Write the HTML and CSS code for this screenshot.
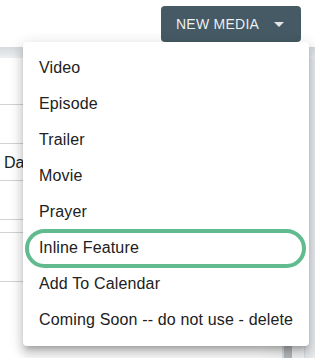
FILE: index.html
```html
<!DOCTYPE html>
<html lang="en">

<head>
    <meta charset="UTF-8">
    <meta name="viewport" content="width=device-width, initial-scale=1.0">
    <title>Media</title>
    <link rel="stylesheet" href="styles.css">
</head>

<body>
    <header class="topbar">
        <button class="new-media">NEW MEDIA <span class="caret"></span></button>
    </header>

    <div class="shade"></div>

    <div class="content">
        <!-- Table behind the menu -->
        <div class="sheet">
            <div class="row row-head"></div>
            <div class="row row-a"></div>
            <div class="row row-b">Date</div>
            <div class="row row-a"></div>
            <div class="row row-gap"></div>
            <div class="row row-tall"></div>
            <div class="row-foot"><span class="scroll"></span></div>
        </div>
        <div class="rail"></div>
    </div>

    <!-- Dropdown Menu -->
    <ul class="menu">
        <li class="menu-item">Video</li>
        <li class="menu-item">Episode</li>
        <li class="menu-item">Trailer</li>
        <li class="menu-item">Movie</li>
        <li class="menu-item">Prayer</li>
        <li class="menu-item focused">Inline Feature</li>
        <li class="menu-item">Add To Calendar</li>
        <li class="menu-item">Coming Soon -- do not use - delete</li>
    </ul>
</body>

</html>
```

FILE: styles.css
```css
/* General Styles */
body {
    font-family: "Liberation Sans", Arial, sans-serif;
    margin: 0;
    padding: 0;
    background-color: white;
    color: #212121;
    overflow: hidden;
    height: 358px;
}

.topbar {
    height: 41px;
    display: flex;
    justify-content: flex-end;
    align-items: flex-start;
    padding: 6px 14px 0 0;
}

.new-media {
    display: flex;
    align-items: center;
    width: 140px;
    height: 36px;
    padding: 0 0 0 15px;
    border: none;
    border-radius: 4px;
    background-color: #455a64;
    color: rgba(255, 255, 255, 0.92);
    font-family: "Liberation Sans", Arial, sans-serif;
    font-size: 14px;
    letter-spacing: 0.25px;
}

.caret {
    margin-left: 15px;
    width: 0;
    height: 0;
    border-top: 5px solid rgba(255, 255, 255, 0.85);
    border-left: 5px solid transparent;
    border-right: 5px solid transparent;
}

.shade {
    height: 11px;
    background: linear-gradient(#d6dade, #eef0f2);
}

/* Table behind */
.content {
    display: flex;
}

.sheet {
    flex: 1;
    background: linear-gradient(90deg, white 85%, #f4f5f6);
}

.row {
    border-bottom: 1px solid #cfd3d6;
    box-sizing: border-box;
    font-size: 16px;
    padding-left: 4px;
}

.row-head { height: 47px; }
.row-a { height: 39px; }
.row-b { height: 37px; line-height: 37px; }
.row-gap { height: 13px; }
.row-tall { height: 49px; }

.row-foot {
    display: flex;
    justify-content: flex-end;
    padding: 64px 12px 0 0;
}

.scroll {
    width: 8px;
    height: 12px;
    background-color: #b9bcbf;
    border-left: 2px solid #dfe1e3;
}

.rail {
    width: 10px;
    background-color: #e8ebee;
    border-left: 1px solid #dde0e3;
}

/* Dropdown Menu */
.menu {
    position: absolute;
    left: 23px;
    top: 42px;
    width: 286px;
    margin: 0;
    padding: 8px 0;
    list-style: none;
    background-color: white;
    border-radius: 4px;
    box-shadow: 0 5px 5px -3px rgba(0, 0, 0, 0.2), 0 8px 10px 1px rgba(0, 0, 0, 0.14), 0 3px 14px 2px rgba(0, 0, 0, 0.12);
}

.menu-item {
    position: relative;
    height: 36px;
    line-height: 36px;
    padding: 0 16px;
    font-size: 16px;
    letter-spacing: 0.15px;
    white-space: nowrap;
    color: #212121;
}

.menu-item.focused::after {
    content: "";
    position: absolute;
    top: -1px;
    bottom: -2px;
    left: 2px;
    right: 3px;
    border: 4px solid #62bb8f;
    border-radius: 20px;
}
```
